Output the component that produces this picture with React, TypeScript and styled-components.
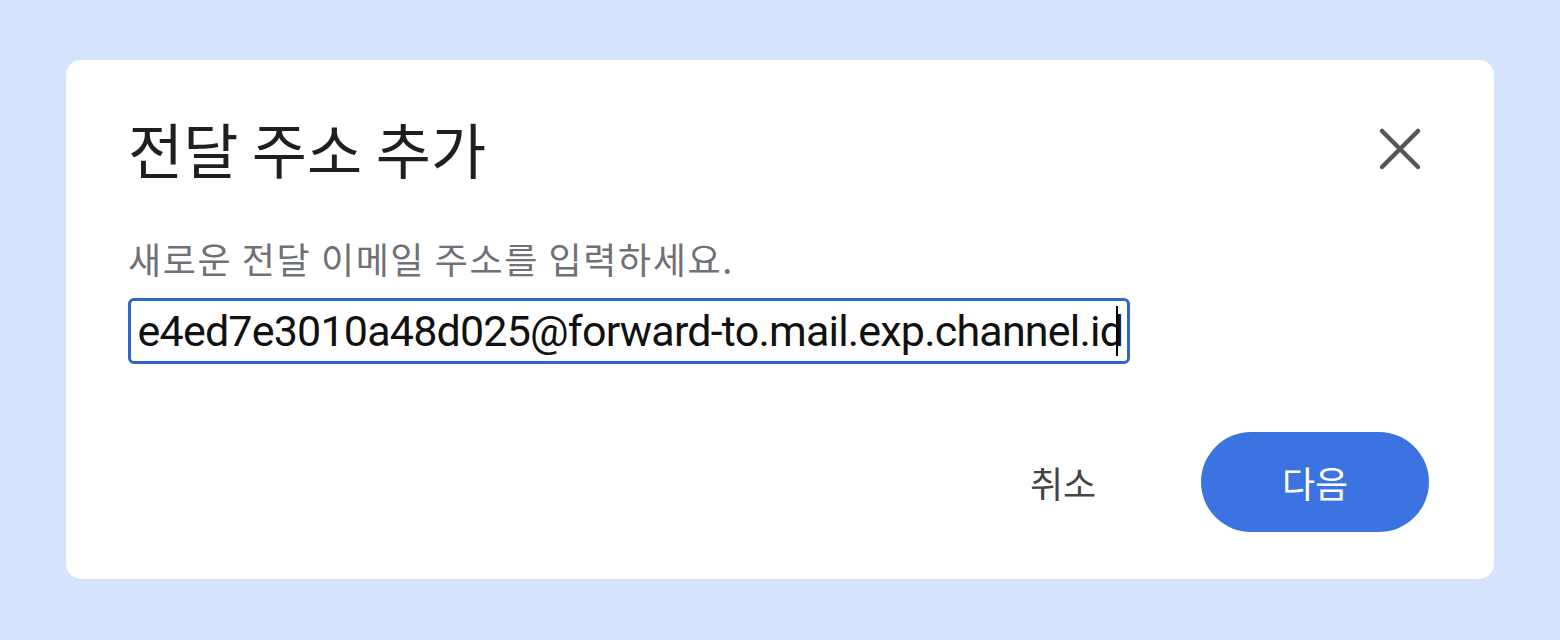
import { useEffect, useRef } from "react";
import styled, { createGlobalStyle } from "styled-components";

const GlobalStyle = createGlobalStyle`
  html, body {
    margin: 0;
    padding: 0;
    background: #d6e3fd;
  }
  body {
    font-family: "Noto Sans CJK KR", "Noto Sans", sans-serif;
  }
`;

const ADDRESS = "f7e4ed7e3010a48d025@forward-to.mail.exp.channel.id";

export default function App() {
  const inputRef = useRef<HTMLInputElement>(null);

  useEffect(() => {
    // keep the end of the address in view, like a focused field after typing
    const el = inputRef.current;
    if (el) {
      el.setSelectionRange(ADDRESS.length, ADDRESS.length);
      el.scrollLeft = el.scrollWidth;
    }
  }, []);

  return (
    <>
      <GlobalStyle />
      <Page>
        <Dialog>
          <Header>
            <Title>전달 주소 추가</Title>
            <CloseButton aria-label="닫기">
              <svg width="44" height="44" viewBox="0 0 44 44">
                <path d="M4 4 L40 40 M40 4 L4 40" stroke="#555555" strokeWidth="4.5" strokeLinecap="round" />
              </svg>
            </CloseButton>
          </Header>
          <Description>새로운 전달 이메일 주소를 입력하세요.</Description>
          <Field>
            <AddressInput ref={inputRef} defaultValue={ADDRESS} spellCheck={false} />
            <Caret />
          </Field>
          <Footer>
            <TextButton>취소</TextButton>
            <PrimaryButton>다음</PrimaryButton>
          </Footer>
        </Dialog>
      </Page>
    </>
  );
}

const Page = styled.div`
  width: 1560px;
  height: 640px;
  padding: 60px 66px 61px;
  box-sizing: border-box;
`;

const Dialog = styled.div`
  background: #ffffff;
  border-radius: 15px;
  height: 519px;
  box-sizing: border-box;
  padding: 48px 65px 47px 62px;
  display: flex;
  flex-direction: column;
`;

const Header = styled.div`
  display: flex;
  align-items: center;
  justify-content: space-between;
  height: 80px;
`;

const Title = styled.h1`
  margin: 0;
  font-size: 60px;
  font-weight: 400;
  color: #1f1f1f;
  line-height: 80px;
`;

const CloseButton = styled.button`
  border: none;
  background: transparent;
  padding: 0;
  margin: 2px 0 0;
  width: 58px;
  height: 58px;
  display: flex;
  align-items: center;
  justify-content: center;
  cursor: pointer;
`;

const Description = styled.p`
  margin: 44px 0 0;
  font-size: 36px;
  line-height: 52px;
  letter-spacing: 1.6px;
  color: #6f7176;
`;

const Field = styled.div`
  position: relative;
  margin-top: 14px;
  width: 1002px;
`;

const AddressInput = styled.input`
  display: block;
  width: 100%;
  height: 66px;
  box-sizing: border-box;
  border: 3px solid #2f63cd;
  border-radius: 6px;
  padding: 0 4px 0 6px;
  font-family: Roboto, "Noto Sans", sans-serif;
  font-size: 43px;
  letter-spacing: -0.8px;
  color: #111111;
  caret-color: transparent;
  outline: none;
  background: #ffffff;
`;

const Caret = styled.span`
  position: absolute;
  right: 12px;
  top: 8px;
  bottom: 8px;
  width: 2px;
  background: #000000;
`;

const Footer = styled.div`
  margin-top: auto;
  display: flex;
  justify-content: flex-end;
  align-items: center;
  gap: 68px;
`;

const TextButton = styled.button`
  border: none;
  background: transparent;
  font-family: "Noto Sans CJK KR", sans-serif;
  font-size: 36px;
  color: #444444;
  width: 140px;
  height: 100px;
  border-radius: 50px;
  cursor: pointer;
`;

const PrimaryButton = styled.button`
  border: none;
  background: #3b74e0;
  color: #ffffff;
  font-family: "Noto Sans CJK KR", sans-serif;
  font-size: 36px;
  width: 228px;
  height: 100px;
  border-radius: 50px;
  cursor: pointer;
`;
